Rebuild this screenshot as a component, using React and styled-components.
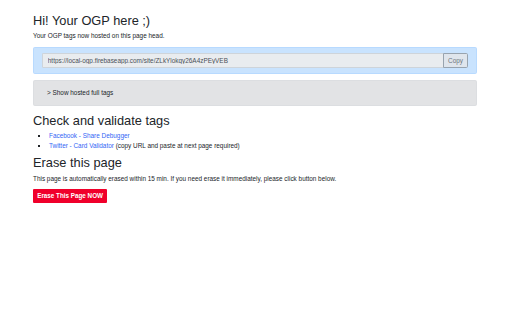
import React from "react";
import styled, { createGlobalStyle } from "styled-components";

const GlobalStyle = createGlobalStyle`
  html, body {
    margin: 0;
    padding: 0;
    background: #fff;
  }
  body {
    font-family: "Liberation Sans", Arial, sans-serif;
    font-size: 6.4px;
    line-height: 1.5;
    color: #212529;
  }
`;

const Container = styled.div`
  width: 444px;
  margin: 0 0 0 33px;
  padding: 12.8px 0 0;
`;

const Heading = styled.h2`
  margin: 0 0 3.2px;
  font-size: 12.8px;
  font-weight: 500;
  line-height: 1.2;
`;

const Text = styled.p`
  margin: 0 0 6px;
`;

const UrlBox = styled.div`
  display: flex;
  padding: 4.8px 8px;
  margin-bottom: 6.4px;
  background: #c9e3fe;
  border: 0.4px solid #b8daff;
  border-radius: 1.6px;
`;

const UrlInput = styled.input`
  flex: 1;
  height: 15.2px;
  box-sizing: border-box;
  padding: 0 4.8px;
  font-family: inherit;
  font-size: 6.4px;
  color: #495057;
  background: #e9ecef;
  border: 0.4px solid #ced4da;
  border-right: none;
  border-radius: 1.6px 0 0 1.6px;
  outline: none;
`;

const CopyButton = styled.button`
  height: 15.2px;
  width: 25px;
  padding: 0;
  font-family: inherit;
  font-size: 6.4px;
  color: #6c757d;
  background: #dfe5ec;
  border: 0.6px solid #98a3ae;
  border-radius: 0 1.6px 1.6px 0;
`;

const FullTags = styled.div`
  display: flex;
  align-items: center;
  height: 26px;
  box-sizing: border-box;
  padding-left: 13px;
  margin-bottom: 6.4px;
  background: #e2e3e5;
  border: 0.4px solid #dcdee1;
  border-radius: 1.6px;
`;

const List = styled.ul`
  margin: 0 0 5px;
  padding-left: 16px;
  list-style: square;
`;

const Link = styled.a`
  color: #3366f5;
  text-decoration: none;
`;

const EraseButton = styled.button`
  height: 14px;
  padding: 0 4.2px;
  font-family: inherit;
  font-size: 6.3px;
  font-weight: 700;
  line-height: 14px;
  color: #fff;
  background: #f0002b;
  border: none;
  border-radius: 1px;
`;

export default function App() {
  return (
    <>
      <GlobalStyle />
      <Container>
        <Heading>Hi! Your OGP here ;)</Heading>
        <Text>Your OGP tags now hosted on this page head.</Text>
        <UrlBox>
          <UrlInput
            readOnly
            value="https://local-ogp.firebaseapp.com/site/ZLkYlokqy26A4zPEyVEB"
          />
          <CopyButton>Copy</CopyButton>
        </UrlBox>
        <FullTags>&gt; Show hosted full tags</FullTags>
        <Heading>Check and validate tags</Heading>
        <List>
          <li>
            <Link href="#">Facebook - Share Debugger</Link>
          </li>
          <li>
            <Link href="#">Twitter - Card Validator</Link> (copy URL and paste
            at next page required)
          </li>
        </List>
        <Heading>Erase this page</Heading>
        <Text>
          This page is automatically erased within 15 min. If you need erase it
          immediately, please click button below.
        </Text>
        <EraseButton>Erase This Page NOW</EraseButton>
      </Container>
    </>
  );
}
